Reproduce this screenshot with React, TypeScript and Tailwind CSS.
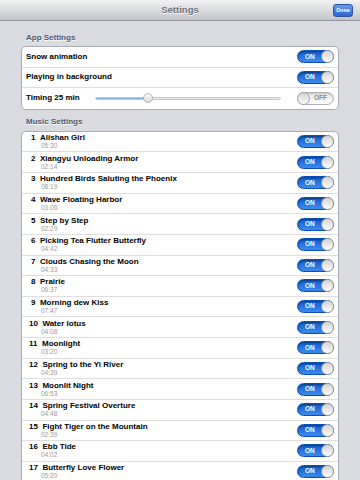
import React from "react";

type Song = { n: number; name: string; time: string };

const songs: Song[] = [
  { n: 1, name: "Alishan Girl", time: "05:30" },
  { n: 2, name: "Xiangyu Unloading Armor", time: "02:14" },
  { n: 3, name: "Hundred Birds Saluting the Phoenix", time: "08:19" },
  { n: 4, name: "Wave Floating Harbor", time: "03:06" },
  { n: 5, name: "Step by Step", time: "02:29" },
  { n: 6, name: "Picking Tea Flutter Butterfly", time: "04:42" },
  { n: 7, name: "Clouds Chasing the Moon", time: "04:33" },
  { n: 8, name: "Prairie", time: "06:37" },
  { n: 9, name: "Morning dew Kiss", time: "07:47" },
  { n: 10, name: "Water lotus", time: "04:08" },
  { n: 11, name: "Moonlight", time: "03:20" },
  { n: 12, name: "Spring to the Yi River", time: "04:39" },
  { n: 13, name: "Moonlit Night", time: "06:53" },
  { n: 14, name: "Spring Festival Overture", time: "04:48" },
  { n: 15, name: "Fight Tiger on the Mountain", time: "02:39" },
  { n: 16, name: "Ebb Tide", time: "04:02" },
  { n: 17, name: "Butterfly Love Flower", time: "05:20" },
];

function Switch({ on }: { on: boolean }) {
  if (on) {
    return (
      <div className="relative flex h-[13px] w-[37px] shrink-0 items-center rounded-full border border-[#0d4fb0] bg-gradient-to-b from-[#0e5ccc] to-[#3d8cf0] shadow-[inset_0_1px_2px_rgba(0,0,0,0.35)]">
        <span className="pl-[7px] text-[6.5px] font-bold leading-none text-white">ON</span>
        <span className="absolute right-[-1px] top-[-1px] h-[13px] w-[13px] rounded-full border border-[#a3a3a3] bg-gradient-to-b from-[#d4d4d4] to-[#fcfcfc]" />
      </div>
    );
  }
  return (
    <div className="relative flex h-[13px] w-[37px] shrink-0 items-center justify-end rounded-full border border-[#b3b3b3] bg-gradient-to-b from-[#e6e6e6] to-[#fdfdfd] shadow-[inset_0_1px_2px_rgba(0,0,0,0.15)]">
      <span className="pr-[6px] text-[6.5px] font-bold leading-none text-[#8a8a8a]">OFF</span>
      <span className="absolute left-[-1px] top-[-1px] h-[13px] w-[13px] rounded-full border border-[#a3a3a3] bg-gradient-to-b from-[#d4d4d4] to-[#fcfcfc]" />
    </div>
  );
}

function SectionHeader({ children, className }: { children: React.ReactNode; className: string }) {
  return (
    <div className={`pl-[26px] text-[8px] font-bold leading-[10px] text-[#4c566c] [text-shadow:0_1px_0_#fff] ${className}`}>
      {children}
    </div>
  );
}

export default function App() {
  return (
    <div className="h-[480px] w-[360px] overflow-hidden bg-[#d9dbe0] font-['Liberation_Sans',Arial,sans-serif]">
      {/* nav bar */}
      <div className="relative flex h-[21px] items-center justify-center border-b border-[#94979d] bg-gradient-to-b from-[#f3f3f5] to-[#c2c5cb]">
        <span className="text-[9.5px] font-bold leading-none text-[#6c717a] [text-shadow:0_1px_0_#fff]">Settings</span>
        <button className="absolute right-[7px] top-[4px] flex h-[13px] w-[20px] items-center justify-center rounded-[3px] border border-[#2b549f] bg-gradient-to-b from-[#6a9bec] to-[#2c65d2] text-[5.5px] font-bold leading-none text-white">
          Done
        </button>
      </div>

      <SectionHeader className="mb-[3px] mt-[12px]">App Settings</SectionHeader>
      <div className="mx-[21px] overflow-hidden rounded-[5px] border border-[#a9acb2] bg-white">
        <div className="flex h-[20.6px] items-center justify-between border-b border-[#dedede] pl-[4px] pr-[4px]">
          <span className="text-[8px] font-bold text-black">Snow animation</span>
          <Switch on />
        </div>
        <div className="flex h-[20.6px] items-center justify-between border-b border-[#dedede] pl-[4px] pr-[4px]">
          <span className="text-[8px] font-bold text-black">Playing in background</span>
          <Switch on />
        </div>
        <div className="flex h-[20.6px] items-center pl-[4px] pr-[4px]">
          <span className="w-[70px] text-[8px] font-bold text-black">Timing 25 min</span>
          <div className="relative ml-[-1px] mr-[16px] flex h-[10px] flex-1 items-center">
            <div className="flex h-[3px] w-full overflow-hidden rounded-full border border-[#c8c8c8]">
              <div className="h-full w-[53px] bg-gradient-to-b from-[#6f9ae0] to-[#a9c6f2]" />
              <div className="h-full flex-1 bg-gradient-to-b from-[#e0e0e0] to-[#f6f6f6]" />
            </div>
            <span className="absolute left-[48px] top-0 h-[10px] w-[10px] rounded-full border border-[#b5b5b5] bg-gradient-to-b from-[#f8f8f8] to-[#dcdcdc]" />
          </div>
          <Switch on={false} />
        </div>
      </div>

      <SectionHeader className="mb-[4px] mt-[7px]">Music Settings</SectionHeader>
      <div className="mx-[21px] rounded-[5px] border border-[#a9acb2] bg-white">
        {songs.map((s) => (
          <div key={s.n} className="flex h-[20.625px] items-center justify-between border-b border-[#dedede] pr-[4px]">
            <div className={`flex flex-col ${s.n < 10 ? "pl-[9px]" : "pl-[7px]"}`}>
              <div className="flex text-[8px] font-bold leading-[9px] text-black">
                <span>{s.n}</span>
                <span className="ml-[4.5px]">{s.name}</span>
              </div>
              <span className={`text-[6.5px] leading-[8px] text-[#9a9a9a] ${s.n < 10 ? "pl-[10px]" : "pl-[12px]"}`}>{s.time}</span>
            </div>
            <Switch on />
          </div>
        ))}
      </div>
    </div>
  );
}
